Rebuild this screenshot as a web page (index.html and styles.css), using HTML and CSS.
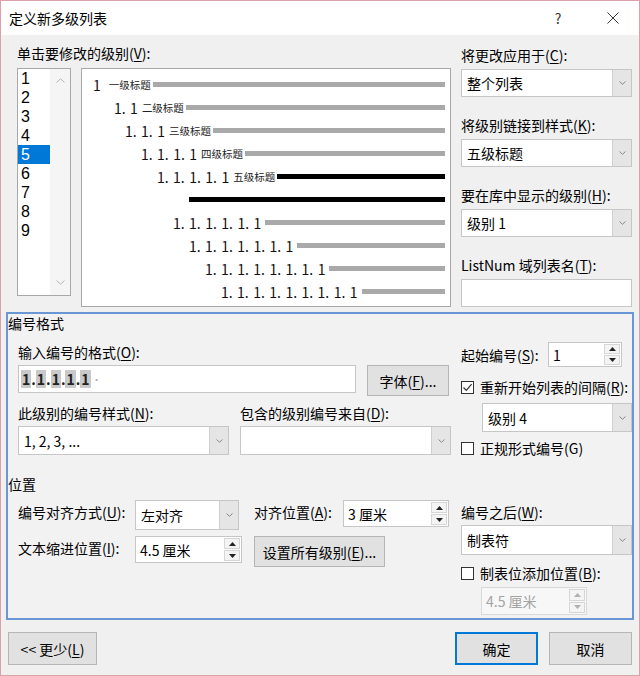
FILE: index.html
```html
<!DOCTYPE html>
<html lang="zh-CN">
<head>
<meta charset="utf-8">
<title>定义新多级列表</title>
<link rel="stylesheet" href="styles.css">
</head>
<body>
<div class="window">
  <div class="titlebar">
    <span class="title">定义新多级列表</span>
    <span class="help">?</span>
    <span class="close"><svg width="12" height="12" viewBox="0 0 12 12"><path d="M0.5 0.5 L11.5 11.5 M11.5 0.5 L0.5 11.5" stroke="#333" stroke-width="1" fill="none"/></svg></span>
  </div>
  <div class="body">
    <div class="top">
      <div class="top-left">
        <div class="label">单击要修改的级别(<u>V</u>):</div>
        <div class="levels">
          <div class="level-list">
            <ul class="level-items">
              <li>1</li><li>2</li><li>3</li><li>4</li><li class="sel">5</li><li>6</li><li>7</li><li>8</li><li>9</li>
            </ul>
            <div class="vscroll">
              <svg width="9" height="5" viewBox="0 0 9 5"><path d="M0.5 4.5 L4.5 0.8 L8.5 4.5" stroke="#b5b5b5" fill="none"/></svg>
              <svg width="9" height="5" viewBox="0 0 9 5"><path d="M0.5 0.5 L4.5 4.2 L8.5 0.5" stroke="#b5b5b5" fill="none"/></svg>
            </div>
          </div>
          <div class="preview">
            <div class="row r1"><span class="num">1</span><span class="head h1">一级标题</span><span class="bar"></span></div>
            <div class="row r2"><span class="num">1. 1</span><span class="head">二级标题</span><span class="bar"></span></div>
            <div class="row r3"><span class="num">1. 1. 1</span><span class="head">三级标题</span><span class="bar"></span></div>
            <div class="row r4"><span class="num">1. 1. 1. 1</span><span class="head">四级标题</span><span class="bar"></span></div>
            <div class="row r5"><span class="num">1. 1. 1. 1. 1</span><span class="head">五级标题</span><span class="bar black"></span></div>
            <div class="row r6"><span class="bar black nomargin"></span></div>
            <div class="row r7"><span class="num">1. 1. 1. 1. 1. 1</span><span class="bar wide"></span></div>
            <div class="row r8"><span class="num">1. 1. 1. 1. 1. 1. 1</span><span class="bar wide"></span></div>
            <div class="row r9"><span class="num">1. 1. 1. 1. 1. 1. 1. 1</span><span class="bar wide"></span></div>
            <div class="row r10"><span class="num">1. 1. 1. 1. 1. 1. 1. 1. 1</span><span class="bar wide"></span></div>
          </div>
        </div>
      </div>
      <div class="top-right">
        <div class="label">将更改应用于(<u>C</u>):</div>
        <div class="select field"><span class="val">整个列表</span><span class="drop"><svg width="7" height="4" viewBox="0 0 7 4"><path d="M0.5 0.5 L3.5 3.3 L6.5 0.5" stroke="#888" fill="none"/></svg></span></div>
        <div class="label">将级别链接到样式(<u>K</u>):</div>
        <div class="select field"><span class="val">五级标题</span><span class="drop"><svg width="7" height="4" viewBox="0 0 7 4"><path d="M0.5 0.5 L3.5 3.3 L6.5 0.5" stroke="#888" fill="none"/></svg></span></div>
        <div class="label">要在库中显示的级别(<u>H</u>):</div>
        <div class="select field"><span class="val">级别 1</span><span class="drop"><svg width="7" height="4" viewBox="0 0 7 4"><path d="M0.5 0.5 L3.5 3.3 L6.5 0.5" stroke="#888" fill="none"/></svg></span></div>
        <div class="label">ListNum 域列表名(<u>T</u>):</div>
        <div class="textbox"></div>
      </div>
    </div>

    <div class="frame">
      <div class="legend">编号格式</div>
      <div class="fmt">
        <div class="fmt-left">
          <div class="label">输入编号的格式(<u>O</u>):</div>
          <div class="fmt-row">
            <div class="format-input"><span class="fld">1</span>.<span class="fld">1</span>.<span class="fld">1</span>.<span class="fld">1</span>.<span class="fld">1</span><span class="tabmark">·</span></div>
            <div class="btn font-btn">字体(<u>F</u>)...</div>
          </div>
          <div class="pair labels">
            <div class="label">此级别的编号样式(<u>N</u>):</div>
            <div class="label">包含的级别编号来自(<u>D</u>):</div>
          </div>
          <div class="pair selects">
            <div class="select sel29"><span class="val">1, 2, 3, ...</span><span class="drop"><svg width="7" height="4" viewBox="0 0 7 4"><path d="M0.5 0.5 L3.5 3.3 L6.5 0.5" stroke="#888" fill="none"/></svg></span></div>
            <div class="select sel29"><span class="val"></span><span class="drop"><svg width="7" height="4" viewBox="0 0 7 4"><path d="M0.5 0.5 L3.5 3.3 L6.5 0.5" stroke="#888" fill="none"/></svg></span></div>
          </div>
        </div>
        <div class="fmt-right">
          <div class="start-row">
            <span class="start-label">起始编号(<u>S</u>):</span>
            <div class="spin start-spin"><span class="val">1</span><span class="arrows"><span class="arr"><svg width="7" height="4" viewBox="0 0 7 4"><path d="M0 4 L3.5 0 L7 4 Z" fill="#222"/></svg></span><span class="arr"><svg width="7" height="4" viewBox="0 0 7 4"><path d="M0 0 L3.5 4 L7 0 Z" fill="#222"/></svg></span></span></div>
          </div>
          <div class="check-row first">
            <span class="checkbox"><svg width="11" height="11" viewBox="0 0 11 11"><path d="M1.5 5.5 L4.3 8.3 L9.6 2.2" stroke="#333" stroke-width="1.2" fill="none"/></svg></span>
            <span>重新开始列表的间隔(<u>R</u>):</span>
          </div>
          <div class="select restart-sel"><span class="val">级别 4</span><span class="drop"><svg width="7" height="4" viewBox="0 0 7 4"><path d="M0.5 0.5 L3.5 3.3 L6.5 0.5" stroke="#888" fill="none"/></svg></span></div>
          <div class="check-row">
            <span class="checkbox"></span>
            <span>正规形式编号(G)</span>
          </div>
        </div>
      </div>

      <div class="legend pos-legend">位置</div>
      <div class="pos">
        <div class="pos-left">
          <div class="plabel">编号对齐方式(<u>U</u>):</div>
          <div class="select align-sel"><span class="val">左对齐</span><span class="drop"><svg width="7" height="4" viewBox="0 0 7 4"><path d="M0.5 0.5 L3.5 3.3 L6.5 0.5" stroke="#888" fill="none"/></svg></span></div>
          <div></div>
          <div class="plabel">对齐位置(<u>A</u>):</div>
          <div class="spin pos-spin"><span class="val">3 厘米</span><span class="arrows"><span class="arr"><svg width="7" height="4" viewBox="0 0 7 4"><path d="M0 4 L3.5 0 L7 4 Z" fill="#222"/></svg></span><span class="arr"><svg width="7" height="4" viewBox="0 0 7 4"><path d="M0 0 L3.5 4 L7 0 Z" fill="#222"/></svg></span></span></div>

          <div class="plabel">文本缩进位置(<u>I</u>):</div>
          <div class="spin pos-spin"><span class="val">4.5 厘米</span><span class="arrows"><span class="arr"><svg width="7" height="4" viewBox="0 0 7 4"><path d="M0 4 L3.5 0 L7 4 Z" fill="#222"/></svg></span><span class="arr"><svg width="7" height="4" viewBox="0 0 7 4"><path d="M0 0 L3.5 4 L7 0 Z" fill="#222"/></svg></span></span></div>
          <div></div>
          <div class="btn all-btn">设置所有级别(<u>E</u>)...</div>
        </div>
        <div class="pos-right">
          <div class="label">编号之后(<u>W</u>):</div>
          <div class="select after-sel"><span class="val">制表符</span><span class="drop"><svg width="7" height="4" viewBox="0 0 7 4"><path d="M0.5 0.5 L3.5 3.3 L6.5 0.5" stroke="#888" fill="none"/></svg></span></div>
          <div class="check-row tab-check">
            <span class="checkbox"></span>
            <span>制表位添加位置(<u>B</u>):</span>
          </div>
          <div class="spin disabled"><span class="val">4.5 厘米</span><span class="arrows"><span class="arr"><svg width="7" height="4" viewBox="0 0 7 4"><path d="M0 4 L3.5 0 L7 4 Z" fill="#b0b0b0"/></svg></span><span class="arr"><svg width="7" height="4" viewBox="0 0 7 4"><path d="M0 0 L3.5 4 L7 0 Z" fill="#b0b0b0"/></svg></span></span></div>
        </div>
      </div>
    </div>

    <div class="footer">
      <div class="btn less-btn">&lt;&lt; 更少(<u>L</u>)</div>
      <div class="spacer"></div>
      <div class="btn ok-btn">确定</div>
      <div class="btn cancel-btn">取消</div>
    </div>
  </div>
</div>
</body>
</html>
```
FILE: styles.css
```css
* { box-sizing: border-box; margin: 0; padding: 0; }
html, body { margin: 0; background: #fff; }
body {
  font-family: "Noto Sans CJK SC", "Noto Sans", sans-serif;
  font-size: 14px;
  color: #000;
}
u { text-decoration: underline; text-underline-offset: 2px; text-decoration-thickness: 1px; }

.window {
  width: 640px;
  height: 676px;
  border: 1px solid #dba1a9;
  background: #f0f0f0;
  display: flex;
  flex-direction: column;
}

.titlebar {
  height: 34px;
  flex: none;
  background: #fff;
  display: flex;
  align-items: center;
  padding-left: 8px;
}
.title { flex: 1; font-size: 14px; }
.help { width: 20px; text-align: center; font-size: 14px; color: #333; }
.close { width: 30px; margin-left: 30px; margin-right: 11px; display: flex; justify-content: center; align-items: center; }

.body {
  flex: 1;
  padding: 8px 5px 0;
  display: flex;
  flex-direction: column;
}

.label { height: 20px; line-height: 20px; white-space: nowrap; }

.top { display: flex; gap: 10px; padding: 0 2px 0 11px; }
.top-left { width: 434px; }
.top-right { width: 171px; padding-top: 2px; }
.top-right .label { margin-bottom: 4px; }
.top-right .field { margin-bottom: 18px; }

.levels { display: flex; gap: 10px; margin-top: 5px; }
.level-list {
  width: 54px;
  height: 228px;
  border: 1px solid #a8a8a8;
  background: #fff;
  display: flex;
}
.level-items { list-style: none; width: 32px; }
.level-items li {
  height: 19px;
  line-height: 19px;
  padding-left: 3px;
  font-family: "Liberation Sans", "Noto Sans", sans-serif;
  font-size: 16px;
}
.level-items li.sel { background: #0078d7; color: #fff; }
.vscroll {
  width: 20px;
  background: #f5f5f5;
  display: flex;
  flex-direction: column;
  justify-content: space-between;
  align-items: center;
  padding: 9px 0 10px;
}

.preview {
  width: 370px;
  height: 239px;
  border: 1px solid #a8a8a8;
  background: #fff;
  padding-top: 4px;
}
.row { height: 23px; display: flex; align-items: center; padding-right: 5px; }
.r1 { padding-left: 11px; }
.r2 { padding-left: 32px; }
.r3 { padding-left: 43px; }
.r4 { padding-left: 59px; }
.r5 { padding-left: 75px; }
.r6 { padding-left: 107px; }
.r7 { padding-left: 91px; }
.r8 { padding-left: 107px; }
.r9 { padding-left: 123px; }
.r10 { padding-left: 139px; }
.num { font-size: 14px; white-space: nowrap; word-spacing: 1.3px; color: #111; }
.head { font-size: 10.5px; margin-left: 4px; white-space: nowrap; color: #222; }
.head.h1 { margin-left: 8px; }
.bar { flex: 1; height: 5px; background: #a9a9a9; margin-left: 2px; }
.bar.wide { margin-left: 4px; }
.bar.black { background: #000; }
.bar.nomargin { margin-left: 0; }

/* controls */
.select {
  display: flex;
  height: 28px;
  background: #fff;
  border: 1px solid #c6c6c6;
}
.select .val { flex: 1; padding-left: 5px; display: flex; align-items: center; white-space: nowrap; }
.select .drop {
  width: 19px;
  background: #e5e5e5;
  border-left: 1px solid #cfcfcf;
  display: flex;
  align-items: center;
  justify-content: center;
}
.textbox { height: 28px; background: #fff; border: 1px solid #c6c6c6; }

.spin {
  display: flex;
  background: #fff;
  border: 1px solid #c6c6c6;
}
.spin .val { flex: 1; padding-left: 4px; display: flex; align-items: center; white-space: nowrap; }
.spin .arrows { width: 17px; display: flex; flex-direction: column; padding: 1px 1px 1px 0; gap: 1px; }
.spin .arr {
  flex: 1;
  background: #f4f4f4;
  border: 1px solid #d6d6d6;
  display: flex;
  align-items: center;
  justify-content: center;
}
.spin.disabled { width: 106px; height: 28px; margin: 4px 0 0 20px; background: #f7f7f7; border-color: #d9d9d9; color: #a3a3a3; }

.btn {
  background: #e1e1e1;
  border: 1px solid #b5b5b5;
  display: flex;
  align-items: center;
  justify-content: center;
  white-space: nowrap;
}

.checkbox {
  width: 13px;
  height: 13px;
  border: 1px solid #333;
  background: #fff;
  display: flex;
  align-items: center;
  justify-content: center;
  flex: none;
}
.check-row { display: flex; align-items: center; gap: 6px; height: 20px; white-space: nowrap; }

/* frame */
.frame {
  margin-top: 5px;
  border: 2px solid #6a96d5;
  background: #f2f2f2;
  padding-bottom: 3px;
}
.legend { height: 18px; line-height: 18px; }
.pos-legend { margin-top: 17px; }

.fmt { display: flex; gap: 10px; padding-left: 10px; margin-top: 10px; }
.fmt-left { width: 433px; }
.fmt-row { display: flex; gap: 11px; margin-top: 3px; align-items: flex-start; }
.format-input {
  width: 338px;
  height: 28px;
  background: #fff;
  border: 1px solid #c6c6c6;
  display: flex;
  align-items: center;
  padding-left: 2px;
  font-weight: 700;
  color: #222;
}
.fld { background: #c9c9c9; padding: 0 1px; line-height: 18px; }
.tabmark { font-weight: 400; color: #aaa; font-size: 10px; margin-left: 1px; }
.font-btn { width: 82px; height: 31px; }

.pair { display: grid; grid-template-columns: 211px 211px; column-gap: 11px; }
.pair.labels { margin-top: 7px; }
.pair.selects { margin-top: 3px; }
.sel29 { height: 29px; }

.fmt-right { width: 171px; }
.start-row { display: flex; align-items: center; height: 25px; }
.start-label { width: 87px; white-space: nowrap; }
.start-spin { width: 74px; height: 25px; }
.check-row.first { margin-top: 10px; }
.restart-sel { margin: 6px 0 0 21px; height: 29px; }
.fmt-right .check-row:last-child { margin-top: 6px; }

.pos { display: flex; gap: 12px; padding-left: 10px; margin-top: 7px; }
.pos-left {
  display: grid;
  grid-template-columns: 117px 107px 12px 89px 106px;
  grid-template-rows: 30px 31px;
  row-gap: 6px;
  align-items: start;
}
.plabel { line-height: 24px; white-space: nowrap; }
.align-sel { width: 104px; height: 30px; }
.pos-spin { height: 27px; }
.all-btn { grid-column: 4 / span 2; width: 131px; height: 31px; }

.pos-right { width: 171px; padding-top: 2px; }
.after-sel { margin-top: 3px; height: 30px; }
.tab-check { margin-top: 8px; }

.footer { display: flex; gap: 11px; margin-top: 12px; padding: 0 2px; }
.spacer { flex: 1; }
.less-btn { width: 89px; height: 33px; margin-right: -11px; }
.ok-btn { width: 83px; height: 33px; border-color: #0078d7; box-shadow: inset 0 0 0 1px #0078d7; }
.cancel-btn { width: 83px; height: 33px; }
```
